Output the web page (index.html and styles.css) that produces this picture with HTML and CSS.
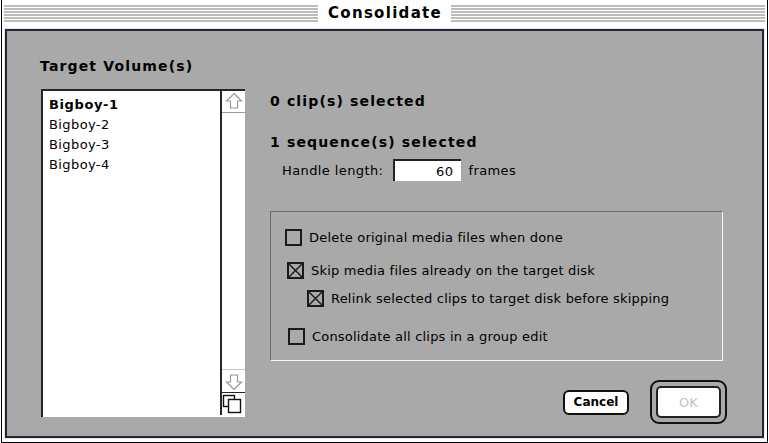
FILE: index.html
```html
<!DOCTYPE html>
<html>
<head>
<meta charset="utf-8">
<link rel="stylesheet" href="styles.css">
</head>
<body>
<div class="window">
  <div class="titlebar">
    <div class="stripes"><span class="title">Consolidate</span></div>
  </div>
  <div class="panel">
    <div class="left">
      <div class="heading">Target Volume(s)</div>
      <div class="listbox">
        <ul class="items">
          <li class="sel">Bigboy-1</li>
          <li>Bigboy-2</li>
          <li>Bigboy-3</li>
          <li>Bigboy-4</li>
        </ul>
        <div class="scrollbar">
          <div class="arrow up">
            <svg width="18" height="18" viewBox="0 0 18 18"><path d="M9 1.5 L16.5 9 L12.5 9 L12.5 16 L5.5 16 L5.5 9 L1.5 9 Z" fill="none" stroke="#9a9a9a" stroke-width="1.2"/></svg>
          </div>
          <div class="track"></div>
          <div class="arrow down">
            <svg width="18" height="18" viewBox="0 0 18 18"><path d="M9 16.5 L16.5 9 L12.5 9 L12.5 2 L5.5 2 L5.5 9 L1.5 9 Z" fill="none" stroke="#9a9a9a" stroke-width="1.2"/></svg>
          </div>
          <div class="grow">
            <svg width="20" height="20" viewBox="0 0 20 20"><rect x="1.5" y="1.5" width="11" height="11" fill="#fff" stroke="#111" stroke-width="1.4"/><rect x="6.5" y="5.5" width="12" height="13" fill="#fff" stroke="#111" stroke-width="1.4"/></svg>
          </div>
        </div>
      </div>
    </div>
    <div class="right">
      <div class="count first">0 clip(s) selected</div>
      <div class="count second">1 sequence(s) selected</div>
      <div class="handle">
        <span class="label">Handle length:</span>
        <span class="field">60</span>
        <span class="unit">frames</span>
      </div>
      <div class="group">
        <div class="row r1"><span class="check"></span><span class="text">Delete original media files when done</span></div>
        <div class="row r2"><span class="check"><svg viewBox="0 0 13 13"><path d="M0 0L13 13M13 0L0 13" stroke="#1a1a1a" stroke-width="1.4"/></svg></span><span class="text">Skip media files already on the target disk</span></div>
        <div class="row r3"><span class="check"><svg viewBox="0 0 13 13"><path d="M0 0L13 13M13 0L0 13" stroke="#1a1a1a" stroke-width="1.4"/></svg></span><span class="text">Relink selected clips to target disk before skipping</span></div>
        <div class="row r4"><span class="check"></span><span class="text">Consolidate all clips in a group edit</span></div>
      </div>
      <div class="buttons">
        <div class="btn cancel">Cancel</div>
        <div class="ring"><div class="btn ok">OK</div></div>
      </div>
    </div>
  </div>
</div>
</body>
</html>
```

FILE: styles.css
```css
html, body {
  margin: 0;
  padding: 0;
  background: #fff;
}
body {
  width: 769px;
  height: 443px;
  overflow: hidden;
  font-family: "DejaVu Sans", sans-serif;
}
.window {
  box-sizing: border-box;
  margin-left: 1px;
  width: 767px;
  height: 443px;
  border-left: 1px solid #000;
  border-right: 1px solid #000;
  border-bottom: 1px solid #000;
  background: #fff;
}
.titlebar {
  height: 28px;
  padding: 5px 2px 0 2px;
  box-sizing: border-box;
}
.stripes {
  height: 18px;
  background: repeating-linear-gradient(to bottom, #bcbcbc 0, #bcbcbc 2px, #fff 2px, #fff 3px);
  display: flex;
  justify-content: center;
  align-items: center;
}
.title {
  background: #fff;
  padding: 0 9px 0 10px;
  height: 22px;
  line-height: 20px;
  font-weight: bold;
  font-size: 15px;
  letter-spacing: 1.3px;
  color: #000;
}
.panel {
  box-sizing: border-box;
  margin: 1px 3px 0 3px;
  height: 409px;
  border: 2px solid #262630;
  box-shadow: 0 0 0 1px #e2e2f4;
  background: #a9a9a9;
  display: flex;
  padding: 27px 0 0 33px;
}
.heading, .count {
  font-weight: bold;
  font-size: 14px;
  line-height: 16px;
  letter-spacing: 1.15px;
  color: #000;
}
.listbox {
  margin-top: 15px;
  margin-left: 1px;
  width: 204px;
  height: 328px;
  box-sizing: border-box;
  border-top: 2px solid #262626;
  border-left: 2px solid #262626;
  background: #fff;
  display: flex;
}
.items {
  list-style: none;
  margin: 0;
  padding: 4px 0 0 6px;
  flex: 1;
  font-size: 13px;
  line-height: 20px;
  letter-spacing: 0.4px;
  color: #000;
}
.items .sel {
  font-weight: bold;
  letter-spacing: 0.6px;
}
.scrollbar {
  width: 23px;
  height: 324px;
  border-left: 2px solid #262626;
  display: flex;
  flex-direction: column;
}
.arrow {
  height: 20px;
  display: flex;
  justify-content: center;
  align-items: center;
}
.arrow.up {
  border-bottom: 1px solid #9a9a9a;
  padding-bottom: 1px;
}
.arrow.down {
  border-top: 1px solid #c8c8c8;
  padding-top: 1px;
  height: 21px;
}
.track {
  flex: 1;
}
.grow {
  border-top: 1.5px solid #222;
  height: 22px;
  display: flex;
  justify-content: flex-start;
  align-items: flex-start;
  padding-left: 0;
}
.grow svg {
  display: block;
  margin-top: 1px;
}
.right {
  margin-left: 25px;
  width: 453px;
  display: flex;
  flex-direction: column;
}
.count.first {
  margin-top: 35px;
}
.count.second {
  margin-top: 25px;
}
.handle {
  margin-top: 9px;
  height: 22px;
  display: flex;
  align-items: center;
  padding-left: 12px;
  font-size: 13px;
  letter-spacing: 0.4px;
}
.field {
  margin-left: 10px;
  width: 68px;
  height: 22px;
  box-sizing: border-box;
  border-top: 2px solid #222;
  border-left: 2px solid #222;
  background: #fff;
  text-align: right;
  padding-right: 8px;
  line-height: 21px;
}
.unit {
  margin-left: 7px;
}
.group {
  margin-top: 30px;
  height: 150px;
  box-sizing: border-box;
  border-top: 1px solid #6a6a6a;
  border-left: 1px solid #6a6a6a;
  border-right: 1px solid #f4f4f4;
  border-bottom: 1px solid #f4f4f4;
  padding-top: 15px;
}
.row {
  height: 20px;
  display: flex;
  align-items: center;
  font-size: 13px;
  letter-spacing: 0.2px;
  color: #000;
}
.row .text {
  margin-left: 7px;
}
.r1 { padding-left: 14px; }
.r2 { padding-left: 16px; margin-top: 13px; }
.r3 { padding-left: 36px; margin-top: 8px; }
.r4 { padding-left: 17px; margin-top: 18px; }
.check {
  width: 17px;
  height: 17px;
  box-sizing: border-box;
  border: 2px solid #1a1a1a;
  display: flex;
  align-items: center;
  justify-content: center;
}
.check svg {
  width: 13px;
  height: 13px;
  display: block;
}
.buttons {
  margin-top: 19px;
  margin-right: -4px;
  display: flex;
  justify-content: flex-end;
  align-items: center;
}
.btn {
  box-sizing: border-box;
  background: #fff;
  display: flex;
  align-items: center;
  justify-content: center;
  font-weight: bold;
  font-size: 12px;
}
.cancel {
  width: 66px;
  height: 25px;
  border: 2px solid #111;
  border-radius: 6px;
  color: #000;
  margin-right: 21px;
}
.ring {
  box-sizing: border-box;
  width: 77px;
  height: 44px;
  border: 2px solid #111;
  border-radius: 9px;
  padding: 4px;
  background: #a9a9a9;
}
.ok {
  width: 100%;
  height: 100%;
  border: 2px solid #222;
  border-radius: 5px;
  color: #c4c4c4;
  font-weight: normal;
  font-size: 13px;
}
```
